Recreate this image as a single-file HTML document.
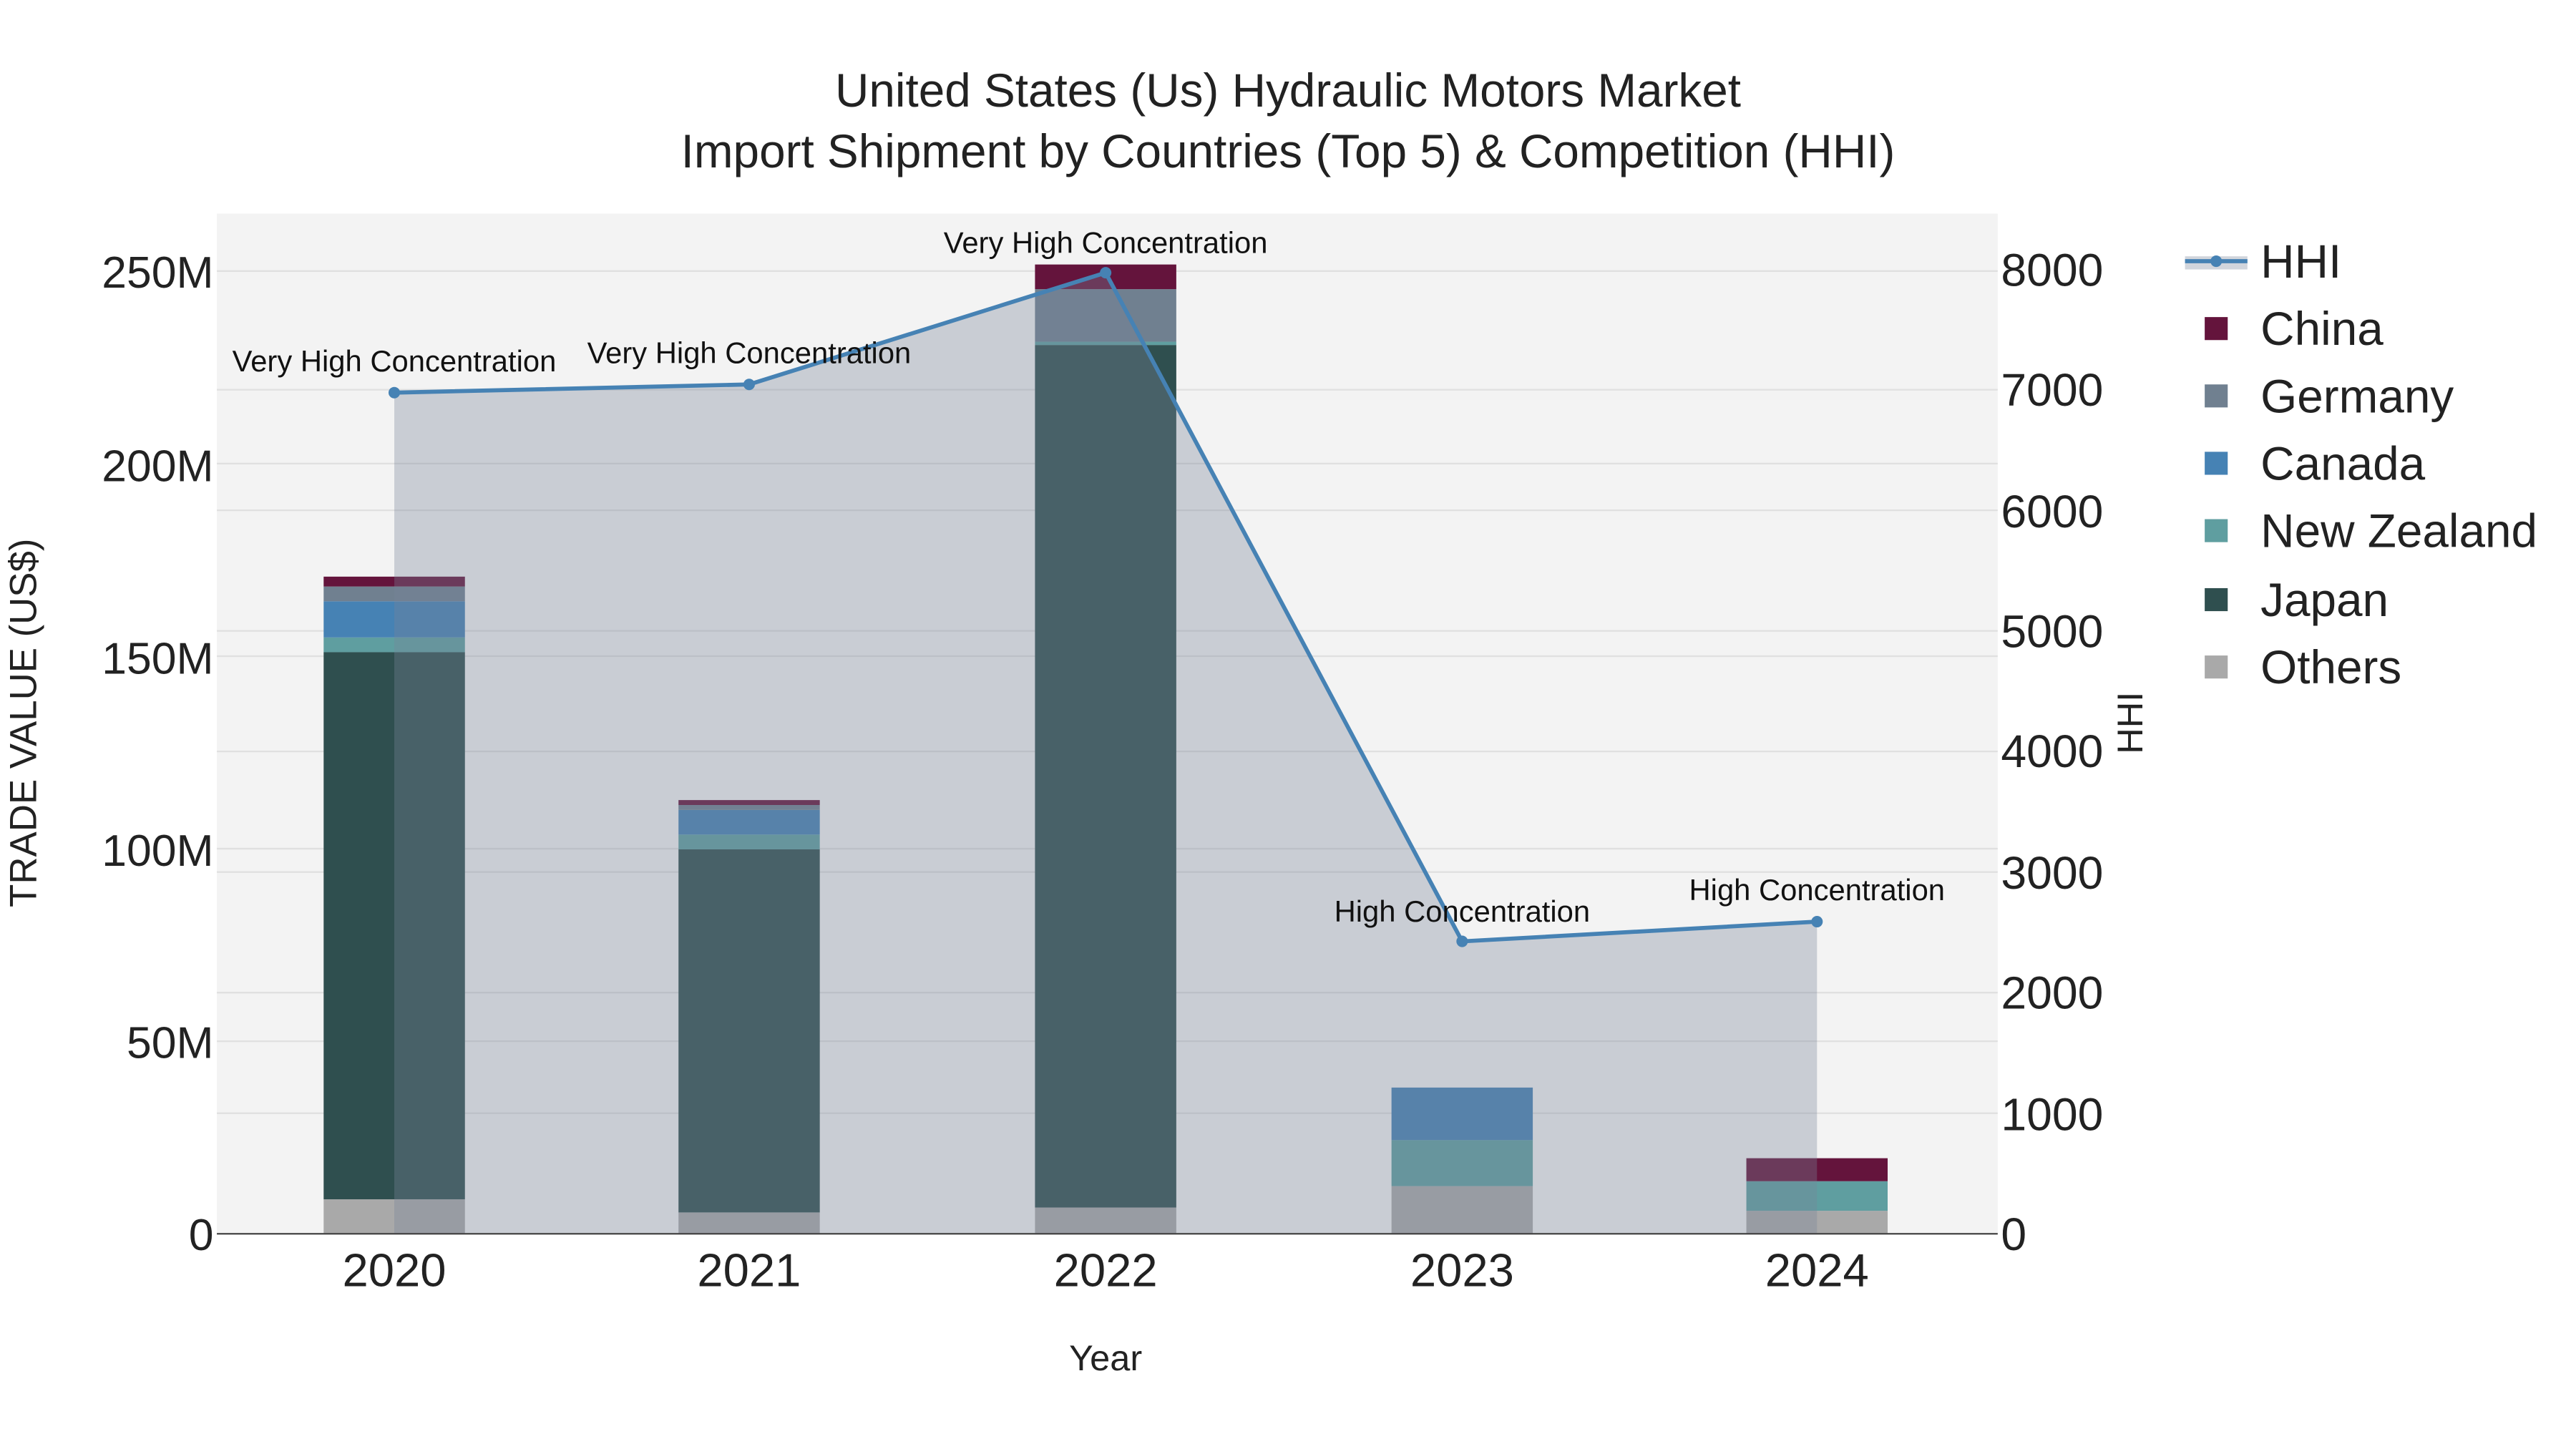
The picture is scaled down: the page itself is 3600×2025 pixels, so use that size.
<!DOCTYPE html>
<html><head><meta charset="utf-8"><style>html,body{margin:0;padding:0;background:#fff}svg{display:block}</style></head>
<body>
<svg width="3600" height="2025" viewBox="0 0 1568 882" xmlns="http://www.w3.org/2000/svg" font-family="Liberation Sans, sans-serif">
<rect width="1568" height="882" fill="#fff"/>
<rect x="132" y="130" width="1084" height="621" fill="#f3f3f3"/>
<g stroke="#e0e0e0" stroke-width="1">
<line x1="132" x2="1216" y1="633.8" y2="633.8"/><line x1="132" x2="1216" y1="516.6" y2="516.6"/>
<line x1="132" x2="1216" y1="399.4" y2="399.4"/><line x1="132" x2="1216" y1="282.2" y2="282.2"/>
<line x1="132" x2="1216" y1="165" y2="165"/>
<line x1="132" x2="1216" y1="677.6" y2="677.6"/><line x1="132" x2="1216" y1="604.2" y2="604.2"/>
<line x1="132" x2="1216" y1="530.8" y2="530.8"/><line x1="132" x2="1216" y1="457.4" y2="457.4"/>
<line x1="132" x2="1216" y1="384" y2="384"/><line x1="132" x2="1216" y1="310.6" y2="310.6"/>
<line x1="132" x2="1216" y1="237.2" y2="237.2"/>
</g>
<g>
<rect x="197" y="730" width="86" height="21" fill="#a9a9a9"/>
<rect x="197" y="397" width="86" height="333" fill="#2f4f4f"/>
<rect x="197" y="388" width="86" height="9" fill="#5f9ea0"/>
<rect x="197" y="366" width="86" height="22" fill="#4682b4"/>
<rect x="197" y="357" width="86" height="9" fill="#708090"/>
<rect x="197" y="351" width="86" height="6" fill="#64143c"/>

<rect x="413" y="738" width="86" height="13" fill="#a9a9a9"/>
<rect x="413" y="517" width="86" height="221" fill="#2f4f4f"/>
<rect x="413" y="508" width="86" height="9" fill="#5f9ea0"/>
<rect x="413" y="493" width="86" height="15" fill="#4682b4"/>
<rect x="413" y="490" width="86" height="3" fill="#708090"/>
<rect x="413" y="487" width="86" height="3" fill="#64143c"/>

<rect x="630" y="735" width="86" height="16" fill="#a9a9a9"/>
<rect x="630" y="210" width="86" height="525" fill="#2f4f4f"/>
<rect x="630" y="208" width="86" height="2" fill="#5f9ea0"/>
<rect x="630" y="176" width="86" height="32" fill="#708090"/>
<rect x="630" y="161" width="86" height="15" fill="#64143c"/>

<rect x="847" y="722" width="86" height="29" fill="#a9a9a9"/>
<rect x="847" y="694" width="86" height="28" fill="#5f9ea0"/>
<rect x="847" y="662" width="86" height="32" fill="#4682b4"/>

<rect x="1063" y="737" width="86" height="14" fill="#a9a9a9"/>
<rect x="1063" y="719" width="86" height="18" fill="#5f9ea0"/>
<rect x="1063" y="705" width="86" height="14" fill="#64143c"/>
</g>
<polygon points="240,239 456,234 673,166 890,573 1106,561 1106,751 240,751" fill="rgb(120,132,152)" fill-opacity="0.34"/>
<polyline points="240,239 456,234 673,166 890,573 1106,561" fill="none" stroke="#4682b4" stroke-width="2.5"/>
<g fill="#4682b4"><circle cx="240" cy="239" r="3.5"/><circle cx="456" cy="234" r="3.5"/><circle cx="673" cy="166" r="3.5"/><circle cx="890" cy="573" r="3.5"/><circle cx="1106" cy="561" r="3.5"/></g>
<line x1="132" x2="1216" y1="751" y2="751" stroke="#444" stroke-width="1"/>
<g font-size="18.2" fill="#111" text-anchor="middle">
<text x="240" y="226">Very High Concentration</text>
<text x="456" y="221">Very High Concentration</text>
<text x="673" y="154">Very High Concentration</text>
<text x="890" y="561">High Concentration</text>
<text x="1106" y="548">High Concentration</text>
</g>
<g font-size="28.6" fill="#222" text-anchor="middle">
<text x="784" y="65">United States (Us) Hydraulic Motors Market</text>
<text x="784" y="102">Import Shipment by Countries (Top 5) &amp; Competition (HHI)</text>
</g>
<g font-size="27.2" fill="#222" text-anchor="end">
<text x="130" y="761">0</text><text x="130" y="644">50M</text><text x="130" y="527">100M</text>
<text x="130" y="410">150M</text><text x="130" y="293">200M</text><text x="130" y="175">250M</text>
</g>
<g font-size="28" fill="#222" text-anchor="start">
<text x="1218" y="761">0</text><text x="1218" y="688">1000</text><text x="1218" y="614">2000</text>
<text x="1218" y="541">3000</text><text x="1218" y="467">4000</text><text x="1218" y="394">5000</text>
<text x="1218" y="321">6000</text><text x="1218" y="247">7000</text><text x="1218" y="174">8000</text>
</g>
<g font-size="28.4" fill="#222" text-anchor="middle">
<text x="240" y="783">2020</text><text x="456" y="783">2021</text><text x="673" y="783">2022</text>
<text x="890" y="783">2023</text><text x="1106" y="783">2024</text>
</g>
<text x="673" y="834" font-size="22" fill="#222" text-anchor="middle">Year</text>
<text transform="translate(22,440) rotate(-90)" font-size="23" fill="#222" text-anchor="middle">TRADE VALUE (US$)</text>
<text transform="translate(1304,440) rotate(-90)" font-size="22" fill="#222" text-anchor="middle">HHI</text>
<g font-size="28.6" fill="#222">
<rect x="1330" y="156" width="38" height="8" fill="rgb(120,132,152)" fill-opacity="0.34"/>
<line x1="1330" x2="1368" y1="159" y2="159" stroke="#4682b4" stroke-width="2.5"/>
<circle cx="1349" cy="159" r="3.5" fill="#4682b4"/>
<text x="1376" y="169">HHI</text>
<rect x="1342" y="193" width="14" height="14" fill="#64143c"/><text x="1376" y="210">China</text>
<rect x="1342" y="234" width="14" height="14" fill="#708090"/><text x="1376" y="251">Germany</text>
<rect x="1342" y="275" width="14" height="14" fill="#4682b4"/><text x="1376" y="292">Canada</text>
<rect x="1342" y="316" width="14" height="14" fill="#5f9ea0"/><text x="1376" y="333">New Zealand</text>
<rect x="1342" y="358" width="14" height="14" fill="#2f4f4f"/><text x="1376" y="375">Japan</text>
<rect x="1342" y="399" width="14" height="14" fill="#a9a9a9"/><text x="1376" y="416">Others</text>
</g>
</svg>
</body></html>
